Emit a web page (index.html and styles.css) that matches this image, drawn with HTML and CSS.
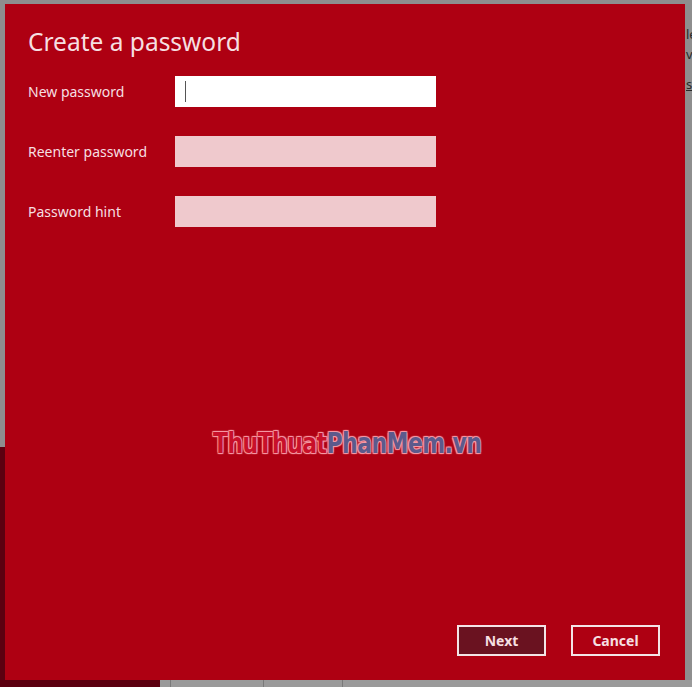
FILE: index.html
```html
<!DOCTYPE html>
<html lang="en">
<head>
  <meta charset="UTF-8">
  <title>Create a password</title>
  <link rel="stylesheet" href="styles.css">
</head>
<body>

  <!-- windows behind the dialog -->
  <div class="back-window">
    <div class="back-text">
      <span>le</span>
      <span>ve</span>
      <span class="link">s</span>
    </div>
  </div>
  <div class="back-red"></div>
  <div class="taskbar">
    <span></span><span></span><span></span>
  </div>

  <!-- Dialog -->
  <div class="dialog">
    <h1 class="title">Create a password</h1>

    <div class="form">
      <label class="label">New password</label>
      <div class="field active"><span class="caret"></span></div>

      <label class="label">Reenter password</label>
      <div class="field"></div>

      <label class="label">Password hint</label>
      <div class="field"></div>
    </div>

    <div class="watermark">
      <span class="wm-red">ThuThuat</span><span class="wm-blue">PhanMem.vn</span>
    </div>

    <div class="actions">
      <button class="btn primary">Next</button>
      <button class="btn">Cancel</button>
    </div>
  </div>

</body>
</html>
```

FILE: styles.css
```css
:root {
  --red: #ae0012;
  --dark-red: #5c0010;
  --grey: #8e8e8e;
  --field: #efc9cd;
  --text: #f6dfe1;
}

body {
  margin: 0;
  width: 692px;
  height: 687px;
  background: var(--grey);
  font-family: 'Segoe UI', 'Noto Sans', sans-serif;
  position: relative;
  overflow: hidden;
}

/* background windows */
.back-window {
  position: absolute;
  top: 0;
  left: 0;
  width: 692px;
  height: 687px;
}

.back-text {
  position: absolute;
  top: 26px;
  left: 686px;
  display: flex;
  flex-direction: column;
  gap: 4px;
  font-size: 13px;
  color: #2a2a2a;
  line-height: 16px;
}

.back-text .link {
  margin-top: 10px;
  text-decoration: underline;
}

.back-red {
  position: absolute;
  left: 0;
  top: 447px;
  width: 160px;
  height: 240px;
  background: var(--dark-red);
}

.taskbar {
  position: absolute;
  left: 160px;
  top: 680px;
  width: 532px;
  height: 7px;
  background: #9a9a9a;
}

.taskbar span {
  position: absolute;
  top: 0;
  width: 1px;
  height: 7px;
  background: #7a7a7a;
}

.taskbar span:nth-child(1) { left: 10px; }
.taskbar span:nth-child(2) { left: 103px; }
.taskbar span:nth-child(3) { left: 182px; }

/* dialog */
.dialog {
  position: absolute;
  left: 5px;
  top: 4px;
  width: 680px;
  height: 676px;
  box-sizing: border-box;
  background: var(--red);
  padding: 22px 25px 24px 23px;
  display: flex;
  flex-direction: column;
  color: var(--text);
}

.title {
  margin: 0;
  font-weight: normal;
  font-size: 24.5px;
  line-height: 32px;
}

.form {
  margin-top: 18px;
  display: grid;
  grid-template-columns: 147px 261px;
  row-gap: 29px;
  align-items: center;
}

.label {
  font-size: 14px;
}

.field {
  height: 31px;
  background: var(--field);
  position: relative;
}

.field.active {
  background: #fff;
}

.caret {
  position: absolute;
  left: 10px;
  top: 5px;
  width: 1px;
  height: 21px;
  background: #555;
}

.watermark {
  margin-top: 199px;
  margin-left: 185px;
  font-family: 'DejaVu Sans', sans-serif;
  font-weight: bold;
  font-stretch: condensed;
  font-size: 29px;
  letter-spacing: -0.6px;
  transform: scaleX(0.84);
  transform-origin: left;
}

.wm-red {
  color: #c8102a;
  text-shadow: 0 0 1px #f59aa6, 1px 1px 1px #f59aa6, -1px -1px 1px #f59aa6, 1px -1px 1px #f59aa6, -1px 1px 1px #f59aa6;
}

.wm-blue {
  color: #5c5a8c;
  text-shadow: 0 0 1px #f59aa6, 1px 1px 1px #f59aa6, -1px -1px 1px #f59aa6, 1px -1px 1px #f59aa6, -1px 1px 1px #f59aa6;
}

.actions {
  margin-top: auto;
  display: flex;
  justify-content: flex-end;
  gap: 25px;
}

.btn {
  width: 89px;
  height: 31px;
  border: 2px solid #f3e4e6;
  background: transparent;
  color: var(--text);
  font-family: inherit;
  font-size: 14px;
  font-weight: bold;
  padding: 0;
}

.btn.primary {
  background: #6a1220;
}
```
